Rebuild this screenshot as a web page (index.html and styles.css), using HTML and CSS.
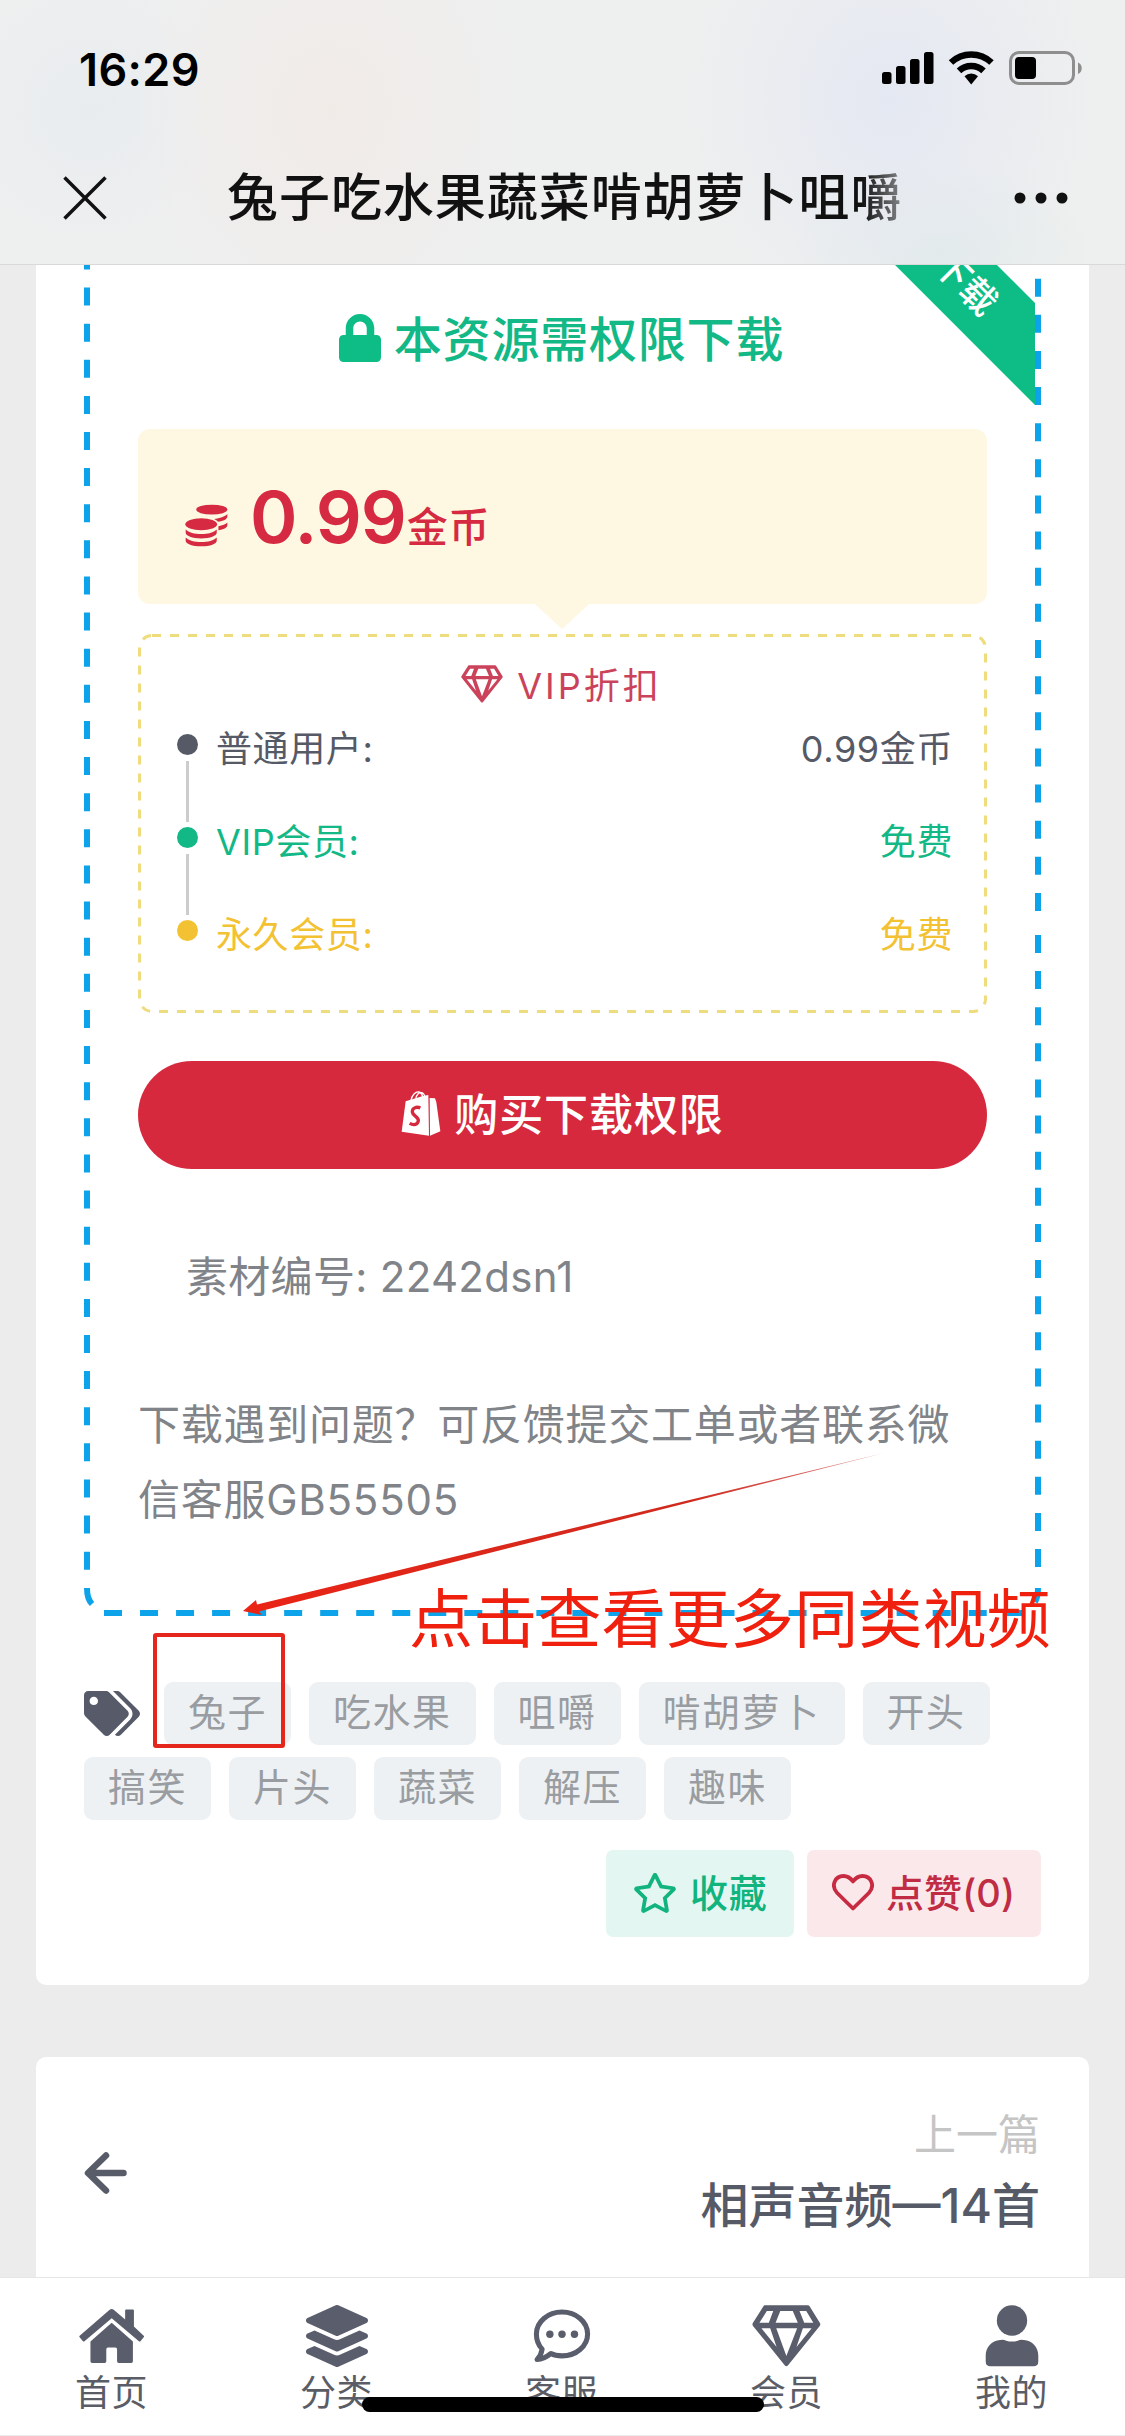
FILE: index.html
```html
<!DOCTYPE html>
<html lang="zh-CN">
<head>
<meta charset="utf-8">
<title>兔子吃水果蔬菜啃胡萝卜咀嚼</title>
<link rel="stylesheet" href="styles.css">
</head>
<body>
<header class="top">
  <div class="status">
    <span class="clock">16:29</span>
    <svg class="status-icons" viewBox="0 0 206 40">
      <g><rect x="2" y="23" width="9.5" height="12" rx="2.5"/><rect x="16" y="17" width="9.5" height="18" rx="2.5"/><rect x="30" y="10" width="9.5" height="25" rx="2.5"/><rect x="44" y="3" width="9.5" height="32" rx="2.5"/></g>
      <g fill="none" stroke="#000" stroke-width="6.5"><path d="M71 13.5a29.500 29.500 0 0 1 40.500 0"/><path d="M79 21.800a17.800 17.800 0 0 1 24.500 0"/></g>
      <path d="M84.500 27.200a10 10 0 0 1 13.500 0L91.200 35.500z"/>
      <rect x="130.500" y="3.500" width="63" height="31" rx="8.500" fill="none" stroke="#8e8e8e" stroke-width="3"/>
      <rect x="135" y="8" width="21" height="22" rx="4"/>
      <path d="M198 13.500c5 2 5 9.500 0 11.500z" fill="#8e8e8e"/>
    </svg>
  </div>
  <div class="nav">
    <svg class="close" viewBox="0 0 44 44"><path d="M1.500 1.500l41 41M42.500 1.500l-41 41"/></svg>
    <h1 class="nav-title">兔子吃水果蔬菜啃胡萝卜咀嚼</h1>
    <svg class="more" viewBox="0 0 54 12"><circle cx="6" cy="6" r="5.500"/><circle cx="27" cy="6" r="5.500"/><circle cx="48" cy="6" r="5.500"/></svg>
  </div>
</header>

<main class="page">
  <article class="card">
    <section class="box">
      <div class="ribbon-clip"><div class="ribbon">下载</div></div>
      <svg class="box-border" viewBox="0 0 957 1351">
        <path stroke-dasharray="18 18.120" d="M3 -13.600V1322"/>
        <path d="M3 1323q0 11 5 16"/>
        <path stroke-dasharray="18 18.030" d="M20 1348H940"/>
        <path stroke-dasharray="18 18.130" d="M954 13.700V650"/>
        <path stroke-dasharray="18 18.120" d="M954 670V1320"/>
        <path d="M954 1323q0 9 -3 14"/>
      </svg>
      <h2 class="box-title">
        <svg viewBox="0 0 448 512"><path d="M400 224h-24v-72C376 68.200 307.800 0 224 0S72 68.200 72 152v72H48c-26.500 0-48 21.500-48 48v192c0 26.500 21.500 48 48 48h352c26.500 0 48-21.500 48-48V272c0-26.500-21.500-48-48-48zm-104 0H152v-72c0-39.700 32.300-72 72-72s72 32.300 72 72v72z"/></svg>
        <span>本资源需权限下载</span>
      </h2>
      <div class="price">
        <svg class="coins" viewBox="46 133 130 130">
          <g fill="#d52a41"><ellipse cx="127" cy="150" rx="47" ry="15"/><path d="M174 163v8c0 8-12 14-28 16-3-4-7-7-12-9 17-2 33-7 40-15zM174 189v8c0 8-12 13-27 15v-12c12-2 22-5 27-11z"/><ellipse cx="95" cy="194" rx="48" ry="18"/><path d="M48 210c9 9 27 14 47 14s38-5 47-14v10c0 9-20 17-47 17s-47-8-47-17zM48 234c9 9 27 14 47 14s38-5 47-14v10c0 9-20 17-47 17s-47-8-47-17z"/></g>
        </svg>
        <span class="amount">0.99</span><span class="unit">金币</span>
      </div>
      <div class="vip">
        <svg class="vip-border" viewBox="0 0 849 379"><path d="M14 1.500H835a12.500 12.500 0 0 1 12.500 12.500V365a12.500 12.500 0 0 1 -12.500 12.500H14a12.500 12.500 0 0 1 -12.500 -12.500V14A12.500 12.500 0 0 1 14 1.500"/></svg>
        <h3 class="vip-title">
          <svg viewBox="456 44 204 184"><use href="#gem"/></svg>
          <span>VIP折扣</span>
        </h3>
        <ul class="levels">
          <li class="normal"><i></i><span>普通用户:</span><b>0.99金币</b></li>
          <li class="member"><i></i><span>VIP会员:</span><b>免费</b></li>
          <li class="forever"><i></i><span>永久会员:</span><b>免费</b></li>
        </ul>
      </div>
      <div class="buy">
        <svg viewBox="62 30 120 138">
          <path fill="#fff" d="M76 64l52-16 16-3 2 122-82-12zM148 54l16 1 4 12 12 87-31 13z"/>
          <path fill="none" stroke="#fff" stroke-width="4" d="M92 62c2-16 14-28 24-26 8 2 11 12 12 20M106 58c2-14 10-22 18-20 7 2 9 8 11 14"/>
          <path fill="none" stroke="#d7293d" stroke-width="10" d="M120 84c-12-6-25 1-24 12 1 12 19 13 18 26-1 12-14 15-26 8"/>
        </svg>
        <span>购买下载权限</span>
      </div>
      <p class="number">素材编号: 2242dsn1</p>
      <p class="help">下载遇到问题？可反馈提交工单或者联系微信客服GB55505</p>
    </section>

    <div class="tags">
      <svg viewBox="0 0 640 512"><path d="M497.941 225.941L286.059 14.059A48 48 0 0 0 252.118 0H48C21.490 0 0 21.490 0 48v204.118a48 48 0 0 0 14.059 33.941l211.882 211.882c18.744 18.745 49.136 18.746 67.882 0l204.118-204.118c18.745-18.745 18.745-49.137 0-67.882zM112 160c-26.510 0-48-21.490-48-48s21.490-48 48-48 48 21.490 48 48-21.490 48-48 48zm513.941 133.823L421.823 497.941c-18.745 18.745-49.137 18.745-67.882 0l-.36-.36L527.640 323.522c16.999-16.999 26.360-39.600 26.360-63.640s-9.362-46.641-26.360-63.640L331.397 0h48.721a48 48 0 0 1 33.941 14.059l211.882 211.882c18.745 18.745 18.745 49.137 0 67.882z"/></svg>
      <span>兔子</span><span>吃水果</span><span>咀嚼</span><span>啃胡萝卜</span><span>开头</span>
      <span>搞笑</span><span>片头</span><span>蔬菜</span><span>解压</span><span>趣味</span>
    </div>

    <div class="actions">
      <div class="action fav">
        <svg viewBox="18 0 540 512"><path d="M528.100 171.500L382 150.200 316.700 17.800c-11.700-23.600-45.600-23.900-57.400 0L194 150.200 47.900 171.500c-26.200 3.800-36.700 36.100-17.700 54.600l105.700 103-25 145.500c-4.500 26.300 23.200 46 46.400 33.700L288 439.600l130.700 68.700c23.200 12.200 50.900-7.400 46.400-33.700l-25-145.500 105.700-103c19-18.500 8.500-50.800-17.700-54.600zM388.600 312.300l23.700 138.400L288 385.400l-124.300 65.300 23.700-138.400-100.600-98 139-20.200 62.200-126 62.200 126 139 20.200-100.600 98z"/></svg>
        <span>收藏</span>
      </div>
      <div class="action like">
        <svg viewBox="0 0 42 37"><path d="M21 34.500L5.200 19C-1.500 11.500 3 2 11.500 2c4 0 7 2 9.500 5.500C23.500 4 26.500 2 30.500 2 39 2 43.500 11.500 36.800 19z" fill="none" stroke="#c72b42" stroke-width="3.800" stroke-linejoin="round"/></svg>
        <span>点赞(0)</span>
      </div>
    </div>
  </article>

  <article class="card prev">
    <svg class="back" viewBox="0 0 43 42"><path d="M22 3.500L4 21l18 17.500M5 21H39.500"/></svg>
    <div class="prev-text">
      <p class="prev-label">上一篇</p>
      <p class="prev-title">相声音频—14首</p>
    </div>
  </article>

  <svg class="marks" viewBox="0 265 1125 1500">
    <defs><linearGradient id="fade" x1="0" x2="1"><stop offset="0" stop-color="#ea2415"/><stop offset=".7" stop-color="#cf2a1e"/><stop offset="1" stop-color="#c8302a" stop-opacity=".6"/></linearGradient></defs>
    <path fill="url(#fade)" d="M243 1611L256 1600 257 1604.500 884 1453 259 1611.500 262 1615z"/>
    <rect x="155" y="1635" width="128" height="111" rx="1" fill="none" stroke="#e5261c" stroke-width="4"/>
  </svg>
  <div class="note">点击查看更多同类视频</div>
</main>

<nav class="tabs">
  <div class="tab">
    <svg class="i-house" viewBox="48 44 194 184"><path d="M139 58q6-5 12 0l34 29V60q0-3 3-3h20q3 0 3 3v48l29 27q2 3 0 5l-9 11q-3 3-6 0L145 83 65 151q-3 3-6 0l-9-11q-2-3 0-5z"/><path d="M145 97l63 55v59q0 5-5 5h-37q-5 0-5-5v-36q0-5-5-5h-22q-5 0-5 5v36q0 5-5 5H87q-5 0-5-5v-59z"/></svg>
    <span>首页</span>
  </div>
  <div class="tab">
    <svg viewBox="0 0 512 512"><path d="M12.410 148.020l232.940 105.670c6.800 3.090 14.490 3.090 21.290 0l232.940-105.670c16.550-7.510 16.550-32.520 0-40.030L266.650 2.310a25.607 25.607 0 0 0-21.290 0L12.410 107.980c-16.550 7.510-16.550 32.530 0 40.040zm487.180 88.280l-58.090-26.330-161.640 73.270c-7.560 3.430-15.590 5.170-23.860 5.170s-16.290-1.740-23.860-5.170L70.510 209.970l-58.100 26.330c-16.550 7.500-16.550 32.500 0 40l232.940 105.590c6.800 3.080 14.490 3.080 21.290 0L499.590 276.300c16.550-7.500 16.550-32.500 0-40zm0 127.800l-57.870-26.230-161.860 73.370c-7.560 3.430-15.590 5.170-23.860 5.170s-16.290-1.740-23.860-5.170L70.290 337.870 12.410 364.100c-16.550 7.500-16.550 32.500 0 40l232.940 105.590c6.800 3.080 14.490 3.080 21.290 0L499.590 404.100c16.550-7.500 16.550-32.500 0-40z"/></svg>
    <span>分类</span>
  </div>
  <div class="tab">
    <svg viewBox="1314 44 184 184"><path fill="none" stroke="#5a5d6b" stroke-width="15" stroke-linejoin="round" d="M1406 65c42 0 76 29 76 65s-34 65-76 65c-14 0-24-2-33-7-11 9-24 17-41 18 8-8 13-18 15-31-11-12-17-28-17-45 0-36 34-65 76-65z"/><circle cx="1370" cy="131" r="11"/><circle cx="1406" cy="131" r="11"/><circle cx="1443" cy="131" r="11"/></svg>
    <span>客服</span>
  </div>
  <div class="tab">
    <svg viewBox="456 44 204 184"><g id="gem"><path fill-rule="evenodd" d="M494 45H622Q625 45 627 48L658 98Q660 102 657 106L563 223Q558 229 553 223L459 106Q456 102 458 98L490 48Q491 45 494 45zM500 62L478 97H506L519 62zM540 62L526 97H592L577 62zM597 62L611 97H638L617 62zM484 113L529 169 510 113zM528 113L558 195 590 113zM607 113L588 169 633 113z"/></g></svg>
    <span>会员</span>
  </div>
  <div class="tab">
    <svg viewBox="1139 44 184 184"><circle cx="1231" cy="90" r="45"/><path d="M1196 148q10-2 18 2 17 5 34 0 8-4 18-2c26 2 43 22 43 46v18q0 14-14 14h-128q-14 0-14-14v-18c0-24 17-44 43-46z"/></svg>
    <span>我的</span>
  </div>
  <div class="home-bar"></div>
</nav>
</body>
</html>
```
FILE: styles.css
```css
* { box-sizing: border-box; margin: 0; padding: 0; }

body {
  width: 1125px;
  height: 2436px;
  overflow: hidden;
  display: flex;
  flex-direction: column;
  background: #ececec;
  font-family: Inter, "Noto Sans CJK SC", sans-serif;
  color: #565a66;
}

svg { display: block; flex: none; }

/* Header */
.top {
  position: relative;
  z-index: 3;
  height: 265px;
  border-bottom: 1px solid #d9d9d9;
  background:
    radial-gradient(ellipse 190px 220px at 330px 110px, #f1ebe8, transparent),
    radial-gradient(ellipse 200px 220px at 890px 100px, #e4e8f2, transparent),
    radial-gradient(ellipse 130px 130px at 90px 110px, #e8ecef, transparent),
    radial-gradient(ellipse 150px 90px at 940px 250px, #e2ebea, transparent),
    #eeefef;
}
.status {
  display: flex;
  justify-content: space-between;
  align-items: center;
  height: 138px;
  padding: 0 45px 0 79px;
}
.clock { font-size: 45px; font-weight: 600; color: #000; letter-spacing: .4px; }
.status-icons { width: 206px; height: 40px; margin-right: -6px; }
.nav {
  display: flex;
  align-items: center;
  height: 120px;
  padding: 0 57px 0 63px;
}
.close { width: 44px; height: 44px; stroke: #111; stroke-width: 3.5; }
.nav-title {
  width: 680px;
  margin-left: 120px;
  white-space: nowrap;
  font-size: 51px;
  letter-spacing: .95px;
  line-height: 80px;
  font-weight: 500;
  color: #111;
  -webkit-mask-image: linear-gradient(90deg, #000 635px, rgba(0,0,0,.4) 680px);
  mask-image: linear-gradient(90deg, #000 635px, rgba(0,0,0,.4) 680px);
}
.more { width: 54px; height: 12px; margin-left: auto; fill: #111; }

/* Content */
.page { position: relative; flex: 1; overflow: hidden; }
.card {
  margin: 0 36px;
  padding: 0 48px;
  height: 1720px;
  background: #fff;
  border-radius: 0 0 10px 10px;
}
.box { position: relative; height: 1351px; padding: 0 54px; }
.box-border { position: absolute; inset: 0; width: 957px; height: 1351px; overflow: visible; fill: none; stroke: #0ca3ea; stroke-width: 6; }
.ribbon-clip { position: absolute; left: 0; top: 0; width: 951px; height: 200px; overflow: hidden; }
.ribbon {
  position: absolute;
  left: 681px;
  top: -17px;
  width: 400px;
  height: 72px;
  transform: rotate(45deg);
  background: #0ebd86;
  color: #fff;
  font-size: 36px;
  font-weight: 500;
  line-height: 70px;
  text-align: center;
}
.box-title {
  display: flex;
  align-items: center;
  justify-content: center;
  gap: 13px;
  height: 164px;
  padding: 0 2px 16px 0;
  font-size: 48px;
  letter-spacing: .8px;
  font-weight: 500;
  color: #12b885;
}
.box-title svg { width: 42px; height: 48px; fill: #0ebd86; transform: translateY(-1px); }
.box-title span { transform: translateY(-3px); }
.price {
  position: relative;
  display: flex;
  align-items: baseline;
  height: 175px;
  padding: 0 48px 0 47px;
  border-radius: 12px;
  background: #fef7e2;
  color: #d52a41;
  line-height: 176px;
}
.price::after {
  content: "";
  position: absolute;
  left: 397px;
  top: 175px;
  border: 27px solid transparent;
  border-top: 25px solid #fef7e2;
  border-bottom: 0;
}
.coins { width: 43px; height: 43px; margin-right: 22px; transform: translateY(4px); }
.amount { font-size: 72px; font-weight: 600; letter-spacing: -1px; }
.unit { margin-left: 1px; font-size: 41px; letter-spacing: .6px; font-weight: 500; transform: translateY(-1px); }

.vip { position: relative; height: 379px; margin-top: 30px; padding: 0 34px 0 36px; }
.vip-border { position: absolute; inset: 0; width: 849px; height: 379px; fill: none; stroke: #efdc7c; stroke-width: 3; stroke-dasharray: 9 9; }
.vip-title {
  display: flex;
  align-items: center;
  justify-content: center;
  gap: 14px;
  height: 67px;
  padding: 34px 4px 0 0;
  font-size: 36px;
  letter-spacing: 3px;
  font-weight: 400;
  color: #cb435b;
}
.vip-title svg { width: 42px; height: 38px; fill: #cb435b; transform: translateY(-1px); }
.vip-title span { transform: translateY(-2px); }
.levels { list-style: none; }
.levels li {
  position: relative;
  display: flex;
  align-items: center;
  height: 93px;
  font-size: 36px;
  letter-spacing: .6px;
}
.levels i { width: 21px; height: 21px; border-radius: 50%; background: currentColor; margin: -7px 18px 0 3px; }
.levels span, .levels b { transform: translateY(-2px); }
.levels b { margin-left: auto; font-weight: 400; }
.levels li + li::before {
  content: "";
  position: absolute;
  left: 12px;
  top: -33px;
  width: 3px;
  height: 61px;
  background: #ccc;
}
.normal { color: #565a66; }
.member { color: #12b885; }
.forever { color: #f3c233; }

.buy {
  display: flex;
  align-items: center;
  justify-content: center;
  gap: 13px;
  height: 108px;
  margin-top: 48px;
  border-radius: 54px;
  background: #d7293d;
  color: #fff;
  font-size: 44px;
  letter-spacing: .9px;
  font-weight: 500;
}
.buy svg { width: 40px; height: 46px; transform: translateY(-2px); }
.buy span { transform: translateY(-3px); }
.number { margin-top: 78px; padding-left: 48px; line-height: 60px; font-size: 42px; letter-spacing: .3px; color: #808388; }
.help { margin-top: 80px; width: 850px; line-height: 75px; font-size: 42px; letter-spacing: .75px; color: #808388; }

.tags { display: flex; flex-wrap: wrap; align-items: center; gap: 12px 18px; margin-top: 66px; }
.tags svg { width: 56px; height: 45px; margin-right: 6px; fill: #565a69; }
.tags span {
  height: 63px;
  padding: 0 24px;
  border-radius: 9px;
  background: #eef1f3;
  color: #999da1;
  font-size: 38px;
  letter-spacing: 1.500px;
  line-height: 60px;
}

.actions { display: flex; justify-content: flex-end; gap: 13px; margin-top: 30px; }
.action {
  display: flex;
  align-items: center;
  gap: 14px;
  height: 87px;
  border-radius: 7px;
  font-size: 38px;
  letter-spacing: .7px;
  font-weight: 500;
}
.action svg { transform: translateY(-1px); }
.action span { transform: translateY(-3px); }
.fav { width: 188px; padding-left: 28px; background: #e4f6f2; color: #12b47d; }
.fav svg { width: 42px; height: 40px; fill: #12b47d; }
.like { width: 234px; padding-left: 25px; gap: 12px; letter-spacing: .1px; background: #fbe8eb; color: #c02c44; }
.like svg { width: 42px; height: 37px; }

.prev {
  display: flex;
  align-items: center;
  justify-content: space-between;
  height: 232px;
  margin-top: 72px;
  border-radius: 10px 10px 0 0;
}
.back { width: 43px; height: 42px; fill: none; stroke: #585c69; stroke-width: 6.5; stroke-linecap: round; stroke-linejoin: round; }
.prev-text { text-align: right; transform: translate(-1px, -2px); }
.prev-label { font-size: 42px; line-height: 70px; color: #c5c5c5; }
.prev-title { font-size: 48px; line-height: 72px; font-weight: 500; }

/* Hand-drawn annotation over the page */
.marks { position: absolute; left: 0; top: 0; width: 1125px; height: 1500px; }
.note {
  position: absolute;
  left: 409px;
  top: 1307px;
  font-size: 64px;
  letter-spacing: .2px;
  line-height: 94px;
  white-space: nowrap;
  color: #f0200f;
}

/* Tab bar */
.tabs {
  position: relative;
  display: flex;
  height: 159px;
  background: #fff;
  border-top: 1px solid #e6e6e6;
  border-bottom: 1px solid #ececec;
}
.tab {
  flex: 1;
  display: flex;
  flex-direction: column;
  align-items: center;
  padding: 27px 2px 0 0;
  font-size: 36px;
  letter-spacing: .6px;
  line-height: 53px;
  color: #5a5d66;
}
.tab svg { height: 62px; fill: #5a5d6b; }
.home-bar {
  position: absolute;
  left: 362px;
  top: 119px;
  width: 402px;
  height: 15px;
  border-radius: 8px;
  background: #000;
}
```
